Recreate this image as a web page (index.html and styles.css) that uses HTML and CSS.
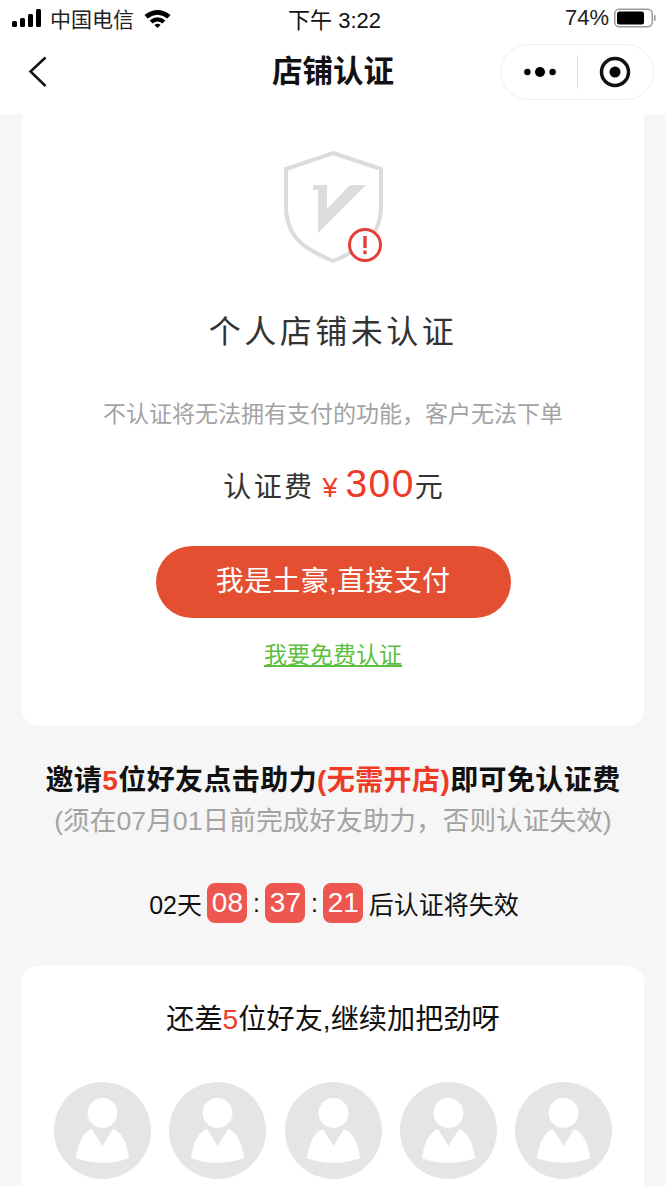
FILE: index.html
```html
<!DOCTYPE html>
<html lang="zh-CN">

<head>
  <meta charset="UTF-8">
  <meta name="viewport" content="width=device-width, initial-scale=1.0">
  <title>店铺认证</title>
  <link rel="stylesheet" href="styles.css">
</head>

<body>
  <!-- Status bar -->
  <div class="statusBar">
    <div class="statusLeft">
      <svg class="signal" width="29" height="18" viewBox="0 0 29 18">
        <rect x="0" y="12" width="5" height="6" rx="1.5" />
        <rect x="8" y="9" width="5" height="9" rx="1.5" />
        <rect x="16" y="5" width="5" height="13" rx="1.5" />
        <rect x="24" y="0" width="5" height="18" rx="1.5" />
      </svg>
      <span class="carrier">中国电信</span>
      <svg class="wifi" width="27" height="19" viewBox="0 0 27 19">
        <path d="M0.5 6 Q13.5 -4 26.5 6 L23.4 9.4 Q13.5 2 3.6 9.4 Z" />
        <path d="M5.6 11.4 Q13.5 5 21.4 11.4 L18.4 14.4 Q13.5 10.4 8.6 14.4 Z" />
        <path d="M10.4 16 Q13.5 13.4 16.6 16 L13.5 19 Z" />
      </svg>
    </div>
    <div class="statusTime">下午 3:22</div>
    <div class="statusRight">
      <span>74%</span>
      <svg width="43" height="20" viewBox="0 0 43 20">
        <rect class="batteryShell" x="0.75" y="1.25" width="37.5" height="17.5" rx="4.5" />
        <rect x="3" y="3.5" width="27" height="13" rx="2.5" />
        <rect class="batteryTip" x="40" y="7" width="1.6" height="6" rx="0.8" />
      </svg>
    </div>
  </div>

  <!-- Nav bar -->
  <div class="navBar">
    <svg class="backIcon" width="20" height="32" viewBox="0 0 20 32">
      <path d="M17.5 1.5 L2.5 15.5 L17.5 30" />
    </svg>
    <div class="navTitle">店铺认证</div>
    <div class="capsule">
      <svg class="capsuleDots" width="32" height="12" viewBox="0 0 32 12">
        <circle cx="3.4" cy="6" r="3.2" />
        <circle cx="16" cy="6" r="5" />
        <circle cx="28.6" cy="6" r="3.2" />
      </svg>
      <span class="capsuleLine"></span>
      <svg width="32" height="32" viewBox="0 0 32 32">
        <circle class="capsuleRing" cx="16" cy="16" r="13.5" />
        <circle cx="16" cy="16" r="5.5" />
      </svg>
    </div>
  </div>

  <!-- Certification card -->
  <div class="card certCard">
    <div class="shield">
      <svg width="104" height="116" viewBox="0 0 104 116">
        <path class="shieldBody" d="M51 5 L99 21 L99 58 Q99 85 78 99 Q64 108 51 113 Q38 108 24 99 Q4 85 4 58 L4 21 Z" />
        <path class="shieldMark" d="M31 37 H45 V61 L68 37 H84 L36 85 V42 H31 Z" />
        <circle class="alertRing" cx="83" cy="97" r="15.5" />
        <rect class="alertMark" x="81.3" y="88" width="3.4" height="12" />
        <rect class="alertMark" x="81.3" y="102.5" width="3.4" height="3.6" />
      </svg>
    </div>
    <h2 class="certTitle">个人店铺未认证</h2>
    <p class="certNote">不认证将无法拥有支付的功能，客户无法下单</p>
    <div class="fee">
      <span class="feeLabel">认证费</span>
      <span class="feeYen">¥</span>
      <span class="feeAmount">300</span><span class="feeUnit">元</span>
    </div>
    <div class="payButton">我是土豪,直接支付</div>
    <a class="freeLink">我要免费认证</a>
  </div>

  <!-- Invite text -->
  <div class="invite">
    <div class="inviteMain">邀请<em>5</em>位好友点击助力<em>(无需开店)</em>即可免认证费</div>
    <div class="inviteSub">(须在07月01日前完成好友助力，否则认证失效)</div>
  </div>

  <!-- Countdown -->
  <div class="countdown">
    <span>02天</span>
    <span class="timeBox">08</span>
    <span class="timeColon">:</span>
    <span class="timeBox">37</span>
    <span class="timeColon">:</span>
    <span class="timeBox">21</span>
    <span>后认证将失效</span>
  </div>

  <!-- Friends card -->
  <div class="card friendCard">
    <div class="friendTitle">还差<em>5</em>位好友,继续加把劲呀</div>
    <div class="avatarRow">
      <svg class="avatar" viewBox="0 0 97 97"><use href="#avatarIcon" /></svg>
      <svg class="avatar" viewBox="0 0 97 97"><use href="#avatarIcon" /></svg>
      <svg class="avatar" viewBox="0 0 97 97"><use href="#avatarIcon" /></svg>
      <svg class="avatar" viewBox="0 0 97 97"><use href="#avatarIcon" /></svg>
      <svg class="avatar" viewBox="0 0 97 97"><use href="#avatarIcon" /></svg>
    </div>
  </div>

  <!-- Shared avatar drawing -->
  <svg class="svgDefs" width="0" height="0">
    <defs>
      <g id="avatarIcon">
        <circle class="avatarBg" cx="48.5" cy="48.5" r="48.5" />
        <circle class="avatarFg" cx="48.5" cy="31" r="15" />
        <path class="avatarFg" d="M38 47 L48.5 64 L59 47 Q72 52 75 76.5 Q48.5 85 22 76.5 Q25 52 38 47 Z" />
      </g>
    </defs>
  </svg>
</body>

</html>
```

FILE: styles.css
```css
html,
body {
  margin: 0;
  height: 1186px;
  overflow: hidden;
}

body {
  background-color: #f6f6f6;
  font-family: 'Liberation Sans', 'Noto Sans CJK SC', sans-serif;
  color: #111;
}

em {
  font-style: normal;
  color: #ee3a26;
}

/* Status bar */
.statusBar {
  height: 38px;
  background-color: #fff;
  display: grid;
  grid-template-columns: 1fr auto 1fr;
  align-items: center;
  padding: 0 9px 2px 12px;
  box-sizing: border-box;
}

.statusLeft {
  display: flex;
  align-items: center;
}

.signal {
  margin-right: 9px;
}

.carrier {
  font-size: 21px;
  color: #222;
}

.wifi {
  margin-left: 10px;
}

.statusTime {
  font-size: 22px;
  color: #111;
}

.statusRight {
  display: flex;
  align-items: center;
  justify-content: flex-end;
  gap: 5px;
  font-size: 22px;
  color: #222;
}

.batteryShell {
  fill: none;
  stroke: #999;
  stroke-width: 1.5;
}

.batteryTip {
  fill: #999;
}

/* Nav bar */
.navBar {
  height: 76px;
  background-color: #fff;
  display: grid;
  grid-template-columns: 1fr auto 1fr;
  align-items: center;
  padding: 0 12px 9px;
  box-sizing: border-box;
}

.backIcon {
  margin-left: 16px;
}

.backIcon path {
  fill: none;
  stroke: #111;
  stroke-width: 2.5;
}

.navTitle {
  font-size: 30.5px;
  font-weight: 700;
  padding-bottom: 6px;
}

.capsule {
  width: 154px;
  height: 56px;
  justify-self: end;
  box-sizing: border-box;
  border: 1px solid #eee;
  border-radius: 28px;
  display: flex;
  align-items: center;
  padding-left: 23px;
}

.capsuleLine {
  width: 1px;
  height: 34px;
  background-color: #ddd;
  margin: 0 21px;
}

.capsuleRing {
  fill: none;
  stroke: #111;
  stroke-width: 3.5;
}

/* Cards */
.card {
  background-color: #fff;
  margin: 0 22px;
}

.certCard {
  height: 612px;
  border-radius: 0 0 16px 16px;
  display: flex;
  flex-direction: column;
  align-items: center;
  padding-top: 34px;
  box-sizing: border-box;
}

.shield {
  height: 116px;
  margin-left: 2px;
}

.shieldBody {
  fill: none;
  stroke: #dcdcdc;
  stroke-width: 4;
}

.shieldMark {
  fill: #dcdcdc;
}

.alertRing {
  fill: #fff;
  stroke: #e33e3a;
  stroke-width: 3;
}

.alertMark {
  fill: #e33e3a;
}

.certTitle {
  margin: 45px 0 0;
  font-size: 32px;
  line-height: 46px;
  font-weight: 400;
  letter-spacing: 3.5px;
  color: #333;
}

.certNote {
  margin: 42px 0 0;
  font-size: 23px;
  line-height: 34px;
  color: #a3a3a3;
}

.fee {
  margin-top: 31px;
  height: 50px;
  display: flex;
  align-items: baseline;
  color: #333;
}

.feeLabel {
  font-size: 28px;
  letter-spacing: 2.4px;
}

.feeYen {
  font-size: 27px;
  color: #ee3a26;
  margin: 0 8px;
}

.feeAmount {
  font-size: 39px;
  color: #ee3a26;
  letter-spacing: 1.4px;
}

.feeUnit {
  font-size: 28px;
}

.payButton {
  width: 355px;
  height: 72px;
  margin-top: 34px;
  border-radius: 36px;
  background-color: #e44f31;
  color: #fff;
  font-size: 28px;
  letter-spacing: 0.3px;
  line-height: 72px;
  text-align: center;
}

.freeLink {
  margin-top: 20px;
  font-size: 23px;
  line-height: 34px;
  color: #5cbf3e;
  text-decoration: underline;
}

/* Invite */
.invite {
  margin-top: 35px;
  text-align: center;
}

.inviteMain {
  font-size: 28px;
  letter-spacing: 0.4px;
  line-height: 40px;
  font-weight: 700;
  color: #111;
}

.inviteSub {
  font-size: 26.7px;
  line-height: 40px;
  color: #a3a3a3;
}

/* Countdown */
.countdown {
  margin-top: 41px;
  height: 42px;
  display: flex;
  align-items: center;
  justify-content: center;
  gap: 5.5px;
  padding-left: 2px;
  font-size: 25px;
  color: #111;
}

.timeBox {
  width: 40px;
  height: 40px;
  border-radius: 8px;
  background-color: #ee5750;
  color: #fff;
  font-size: 28px;
  line-height: 40px;
  text-align: center;
}

.timeColon {
  font-size: 25px;
}

/* Friends */
.friendCard {
  margin-top: 42px;
  height: 220px;
  border-radius: 16px 16px 0 0;
  padding: 32px 32px 0;
  box-sizing: border-box;
}

.friendTitle {
  font-size: 28.2px;
  line-height: 42px;
  text-align: center;
}

.avatarRow {
  margin-top: 42px;
  display: flex;
  justify-content: space-between;
}

.avatar {
  width: 97px;
  height: 97px;
}

.avatarBg {
  fill: #e5e5e5;
}

.avatarFg {
  fill: #fff;
}

.svgDefs {
  display: block;
}
```
